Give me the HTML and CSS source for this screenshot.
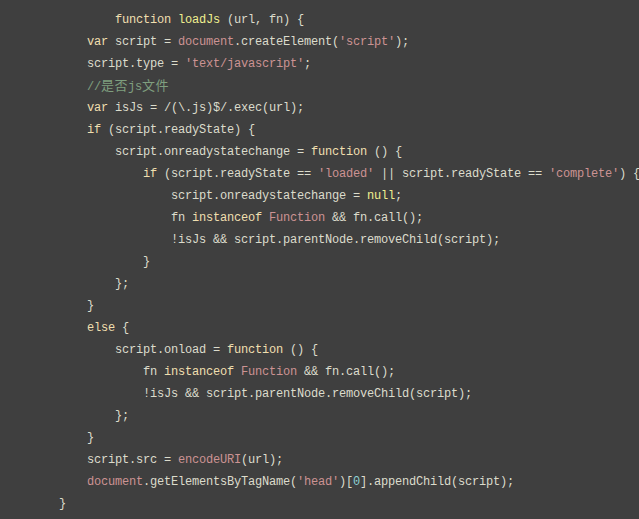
FILE: index.html
```html
<!DOCTYPE html>
<html>
<head>
<meta charset="utf-8">
<link rel="stylesheet" href="styles.css">
</head>
<body>
<div class="code">
<div class="ln i2"><span class="kw">function</span> <span class="fn">loadJs</span> (url, fn) {</div>
<div class="ln i1"><span class="kw">var</span> script = <span class="bi">document</span>.createElement(<span class="str">'script'</span>);</div>
<div class="ln i1">script.type = <span class="str">'text/javascript'</span>;</div>
<div class="ln i1"><span class="cm">//<span class="cjk">是否</span>js<span class="cjk">文件</span></span></div>
<div class="ln i1"><span class="kw">var</span> isJs = /(\.js)$/.exec(url);</div>
<div class="ln i1"><span class="kw">if</span> (script.readyState) {</div>
<div class="ln i2">script.onreadystatechange = <span class="kw">function</span> () {</div>
<div class="ln i3"><span class="kw">if</span> (script.readyState == <span class="str">'loaded'</span> || script.readyState == <span class="str">'complete'</span>) {</div>
<div class="ln i4">script.onreadystatechange = <span class="fn">null</span>;</div>
<div class="ln i4">fn <span class="kw">instanceof</span> <span class="bi">Function</span> &amp;&amp; fn.call();</div>
<div class="ln i4">!isJs &amp;&amp; script.parentNode.removeChild(script);</div>
<div class="ln i3">}</div>
<div class="ln i2">};</div>
<div class="ln i1">}</div>
<div class="ln i1"><span class="kw">else</span> {</div>
<div class="ln i2">script.onload = <span class="kw">function</span> () {</div>
<div class="ln i3">fn <span class="kw">instanceof</span> <span class="bi">Function</span> &amp;&amp; fn.call();</div>
<div class="ln i3">!isJs &amp;&amp; script.parentNode.removeChild(script);</div>
<div class="ln i2">};</div>
<div class="ln i1">}</div>
<div class="ln i1">script.src = <span class="bi">encodeURI</span>(url);</div>
<div class="ln i1"><span class="bi">document</span>.getElementsByTagName(<span class="str">'head'</span>)[<span class="num">0</span>].appendChild(script);</div>
<div class="ln">}</div>
</div>
</body>
</html>
```

FILE: styles.css
```css
html, body {
  margin: 0;
  padding: 0;
  background: #3f3f3f;
  height: 100%;
}
body {
  overflow: hidden;
}
.code {
  display: flex;
  flex-direction: column;
  padding: 9px 0 0 59px;
  font-family: "Liberation Mono", "DejaVu Sans Mono", monospace;
  font-size: 12px;
  letter-spacing: -0.2px;
  line-height: 22px;
  color: #dcdccc;
}
.ln {
  white-space: pre;
  height: 22px;
}
.i1 { padding-left: 28px; }
.i2 { padding-left: 56px; }
.i3 { padding-left: 84px; }
.i4 { padding-left: 112px; }
.kw { color: #f0dfaf; }
.fn { color: #efef8f; }
.str { color: #cc9393; }
.bi { color: #cc9393; }
.cm { color: #7f9f7f; }
.num { color: #8cd0d3; }
.cjk {
  font-family: "Noto Sans CJK SC", sans-serif;
  font-size: 13px;
  letter-spacing: 0.5px;
  line-height: 20px;
}
```
